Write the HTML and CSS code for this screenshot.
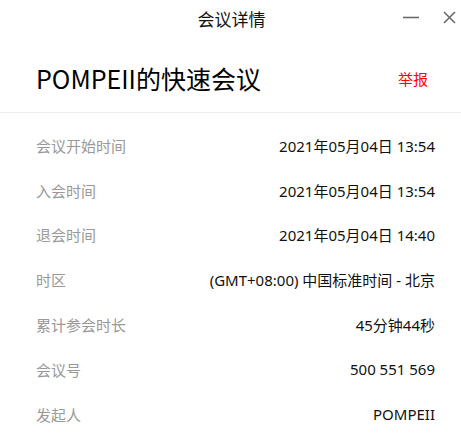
FILE: index.html
```html
<!DOCTYPE html>
<html lang="zh-CN">
<head>
<meta charset="utf-8">
<title>会议详情</title>
<link rel="stylesheet" href="styles.css">
</head>
<body>
<div class="window">
  <div class="titlebar">
    <div class="spacer"></div>
    <div class="title">会议详情</div>
    <div class="controls">
      <svg class="ctl min" width="16" height="12" viewBox="0 0 16 12"><path d="M0 6.5 H16" stroke="#6b6b6b" stroke-width="1.6"/></svg>
      <svg class="ctl close" width="13" height="13" viewBox="0 0 13 13"><path d="M1 1 L12 12 M12 1 L1 12" stroke="#6b6b6b" stroke-width="1.6"/></svg>
    </div>
  </div>
  <div class="header">
    <h1 class="heading">POMPEII的快速会议</h1>
    <a class="report">举报</a>
  </div>
  <div class="rows">
    <div class="row"><span class="label">会议开始时间</span><span class="value">2021年05月04日 13:54</span></div>
    <div class="row"><span class="label">入会时间</span><span class="value">2021年05月04日 13:54</span></div>
    <div class="row"><span class="label">退会时间</span><span class="value">2021年05月04日 14:40</span></div>
    <div class="row"><span class="label">时区</span><span class="value">(GMT+08:00) 中国标准时间 - 北京</span></div>
    <div class="row"><span class="label">累计参会时长</span><span class="value">45分钟44秒</span></div>
    <div class="row"><span class="label">会议号</span><span class="value">500 551 569</span></div>
    <div class="row"><span class="label">发起人</span><span class="value">POMPEII</span></div>
  </div>
</div>
</body>
</html>
```
FILE: styles.css
```css
html, body {
  margin: 0;
  padding: 0;
  background: #fff;
}
body {
  font-family: "Noto Sans CJK SC", "Noto Sans", sans-serif;
  color: #111;
}
.window {
  width: 461px;
  height: 438px;
  overflow: hidden;
}
.titlebar {
  height: 38px;
  display: grid;
  grid-template-columns: 1fr auto 1fr;
  align-items: center;
}
.title {
  font-size: 17px;
  line-height: 20px;
  color: #111;
  margin-left: 2px;
}
.controls {
  justify-self: end;
  display: flex;
  align-items: center;
  gap: 24px;
  padding-right: 5px;
  margin-top: -4px;
}
.header {
  height: 68px;
  padding: 6px 33px 0 36px;
  display: flex;
  align-items: center;
  justify-content: space-between;
  border-bottom: 1px solid #ececec;
}
.heading {
  margin: 0;
  font-size: 25px;
  font-weight: normal;
  line-height: 30px;
  color: #000;
}
.report {
  font-size: 15px;
  color: #f00;
  cursor: pointer;
}
.rows {
  padding: 10px 26px 0 36px;
}
.row {
  height: 44.8px;
  display: flex;
  align-items: center;
  justify-content: space-between;
  font-size: 15px;
}
.label {
  color: #999;
}
.value {
  font-family: "Noto Sans", "Noto Sans CJK SC", sans-serif;
  color: #111;
}
```
